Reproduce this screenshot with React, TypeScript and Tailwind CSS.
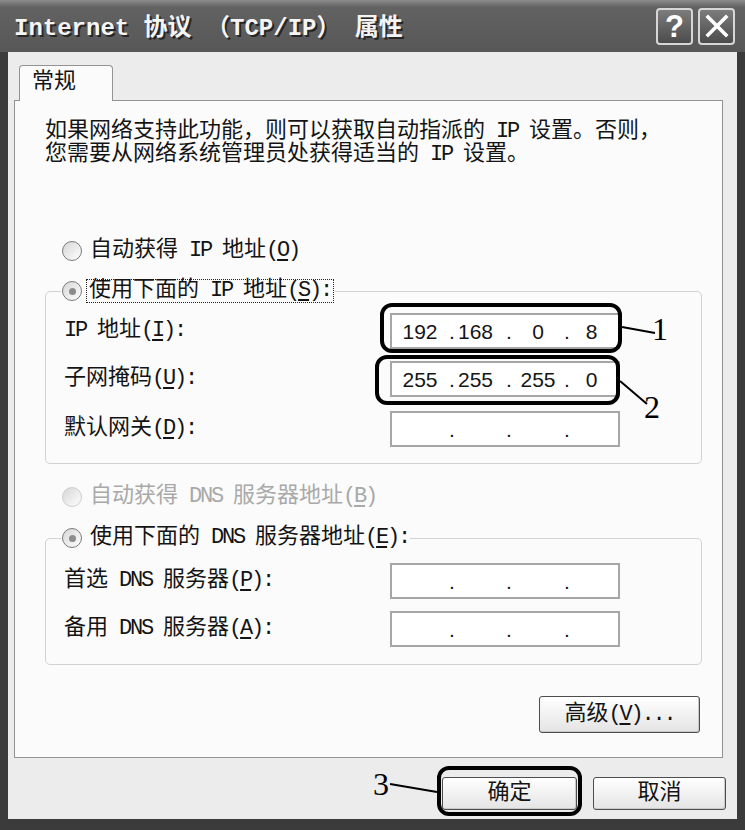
import clsx from "clsx";

const CJK_RE = /([\u3000-\u303f\u4e00-\u9fff\uff00-\uffef]+)/;

function Mixed({ text }: { text: string }) {
  return (
    <>
      {text
        .split(CJK_RE)
        .filter(Boolean)
        .map((part, i) =>
          CJK_RE.test(part) ? (
            <span key={i}>{part}</span>
          ) : (
            <span key={i} className="tracking-[-2.2px]">
              {part}
            </span>
          )
        )}
    </>
  );
}

function Label({ text, k, colon, tail }: { text: string; k: string; colon?: boolean; tail?: string }) {
  return (
    <span className="whitespace-pre">
      <Mixed text={text} />
      <span className="tracking-[-2.2px]">
        (<span className="underline underline-offset-[3px]">{k}</span>){colon ? ":" : ""}
        {tail}
      </span>
    </span>
  );
}

function Radio({ checked, disabled }: { checked?: boolean; disabled?: boolean }) {
  return (
    <span
      className={clsx(
        "flex h-[20px] w-[20px] shrink-0 items-center justify-center rounded-full border bg-linear-to-br from-[#d6d6d6] to-white",
        disabled ? "border-[#cdcdcd]" : "border-[#7a7a7a]"
      )}
    >
      {checked && <span className="h-[7px] w-[7px] rounded-full bg-[#8c8c8c]" />}
    </span>
  );
}

function Dot() {
  return <span className="w-[8px] text-center">.</span>;
}

function IpField({ parts }: { parts?: string[] }) {
  const p = parts ?? ["", "", "", ""];
  return (
    <div className="flex h-[36px] w-[230px] items-center border-2 border-[#a6a6a6] bg-white font-['Liberation_Sans',sans-serif] text-[21px] leading-none text-[#151515]">
      <span className="w-[56px] text-center">{p[0]}</span>
      <Dot />
      <span className="w-[49px] pr-[10px] text-center">{p[1]}</span>
      <Dot />
      <span className="w-[50px] text-center">{p[2]}</span>
      <Dot />
      <span className="w-[47px] pr-[6px] text-center">{p[3]}</span>
    </div>
  );
}

function Row({ label, parts, className }: { label: React.ReactNode; parts?: string[]; className?: string }) {
  return (
    <div className={clsx("flex items-center pl-[18px]", className)}>
      <div className="w-[326px]">{label}</div>
      <IpField parts={parts} />
    </div>
  );
}

function Btn({ children, className }: { children: React.ReactNode; className?: string }) {
  return (
    <div
      className={clsx(
        "flex items-center justify-center rounded-[3px] border border-[#4d4d4d] bg-linear-to-b from-white to-[#e4e4e4] shadow-[inset_-1px_-1px_0_#c9c9c9]",
        className
      )}
    >
      {children}
    </div>
  );
}

export default function App() {
  return (
    <div className="relative flex h-[830px] w-[745px] flex-col overflow-hidden bg-[#3b3b3b] font-['Liberation_Mono','Noto_Sans_CJK_SC',monospace] text-[22px] leading-[22px] text-[#141414]">
      {/* title bar */}
      <div className="flex h-[52px] shrink-0 items-center bg-linear-to-b from-[#8c8c8c] from-[0%] via-[#626262] via-[14%] to-[#575757] pl-[14px] pr-[10px]">
        <span className="mt-[5px] whitespace-pre text-[24px] font-bold leading-none text-[#f4f4f4] [text-shadow:2px_2px_0_#262626]">
          Internet 协议 （TCP/IP） 属性
        </span>
        <div className="ml-auto flex gap-[5px]">
          <div className="flex h-[37px] w-[37px] items-center justify-center rounded-[4px] border-2 border-[#d6d6d6] bg-linear-to-b from-[#7c7c7c] to-[#4c4c4c] font-['Liberation_Sans',sans-serif] text-[31px] font-bold leading-none text-white">
            ?
          </div>
          <div className="flex h-[37px] w-[37px] items-center justify-center rounded-[4px] border-2 border-[#d6d6d6] bg-linear-to-b from-[#7c7c7c] to-[#4c4c4c]">
            <svg width="24" height="24" viewBox="0 0 24 24">
              <path d="M3 3 L21 21 M21 3 L3 21" stroke="white" strokeWidth="3.6" strokeLinecap="square" />
            </svg>
          </div>
        </div>
      </div>

      {/* body */}
      <div className="mx-[8px] mb-[11px] flex flex-1 flex-col bg-[#ececec] pl-[6px] pr-[11px] pt-[13px]">
        <div className="relative z-10 -mb-px ml-[5px] h-[36px] w-[94px] rounded-t-[4px] border border-b-0 border-[#939393] bg-[#fbfbfb] pl-[12px] pt-[6px]">
          常规
        </div>
        <div className="mr-[3px] flex h-[658px] flex-col border border-[#939393] bg-[#fbfbfb]">
          <p className="mt-[19px] pl-[30px] leading-[23px]">
            <Mixed text="如果网络支持此功能，则可以获取自动指派的 IP 设置。否则，" />
            <br />
            <Mixed text="您需要从网络系统管理员处获得适当的 IP 设置。" />
          </p>

          <div className="ml-[47px] mt-[74px] flex h-[22px] items-center">
            <Radio />
            <span className="ml-[8px]">
              <Label text="自动获得 IP 地址" k="O" />
            </span>
          </div>

          <fieldset className="ml-[30px] mr-[20px] mt-[18px] rounded-[5px] border border-[#d2d2d2] pb-[16px]">
            <legend className="ml-[15px] px-[1px]">
              <div className="flex h-[22px] items-center">
                <Radio checked />
                <span className="ml-[4px] border border-dotted border-[#222] px-[2px]">
                  <Label text="使用下面的 IP 地址" k="S" colon />
                </span>
              </div>
            </legend>
            <Row className="mt-[11px]" label={<Label text="IP 地址" k="I" colon />} parts={["192", "168", "0", "8"]} />
            <Row className="mt-[12px]" label={<Label text="子网掩码" k="U" colon />} parts={["255", "255", "255", "0"]} />
            <Row className="mt-[14px]" label={<Label text="默认网关" k="D" colon />} />
          </fieldset>

          <div className="ml-[47px] mt-[22px] flex h-[22px] items-center text-[#a9a9a9]">
            <Radio disabled />
            <span className="ml-[8px]">
              <Label text="自动获得 DNS 服务器地址" k="B" />
            </span>
          </div>

          <fieldset className="ml-[30px] mr-[20px] mt-[19px] rounded-[5px] border border-[#d2d2d2] pb-[17px]">
            <legend className="ml-[15px] px-[1px]">
              <div className="flex h-[22px] items-center">
                <Radio checked />
                <span className="ml-[8px]">
                  <Label text="使用下面的 DNS 服务器地址" k="E" colon />
                </span>
              </div>
            </legend>
            <Row className="mt-[14px]" label={<Label text="首选 DNS 服务器" k="P" colon />} />
            <Row className="mt-[12px]" label={<Label text="备用 DNS 服务器" k="A" colon />} />
          </fieldset>

          <div className="mr-[22px] mt-[31px] flex justify-end">
            <Btn className="h-[37px] w-[161px]">
              <Label text="高级" k="V" tail="..." />
            </Btn>
          </div>
        </div>

        <div className="mt-[19px] flex justify-end gap-[16px]">
          <Btn className="h-[33px] w-[135px]">确定</Btn>
          <Btn className="h-[33px] w-[133px]">取消</Btn>
        </div>
      </div>

      {/* annotation callouts */}
      <svg className="pointer-events-none absolute inset-0" width="745" height="830">
        <rect x="382" y="305" width="238" height="46" rx="10" fill="none" stroke="#000" strokeWidth="4" />
        <rect x="377" y="357" width="241" height="46" rx="10" fill="none" stroke="#000" strokeWidth="4" />
        <rect x="439" y="768" width="141" height="46" rx="10" fill="none" stroke="#000" strokeWidth="4" />
        <path d="M622 327 L655 333" stroke="#000" strokeWidth="2" />
        <path d="M620 381 L647 404" stroke="#000" strokeWidth="2" />
        <path d="M390 784 L437 792" stroke="#000" strokeWidth="2" />
      </svg>
      <span className="absolute left-[652px] top-[313px] font-['Liberation_Serif',serif] text-[32px] leading-[32px] text-black">1</span>
      <span className="absolute left-[644px] top-[391px] font-['Liberation_Serif',serif] text-[32px] leading-[32px] text-black">2</span>
      <span className="absolute left-[373px] top-[768px] font-['Liberation_Serif',serif] text-[32px] leading-[32px] text-black">3</span>
    </div>
  );
}
